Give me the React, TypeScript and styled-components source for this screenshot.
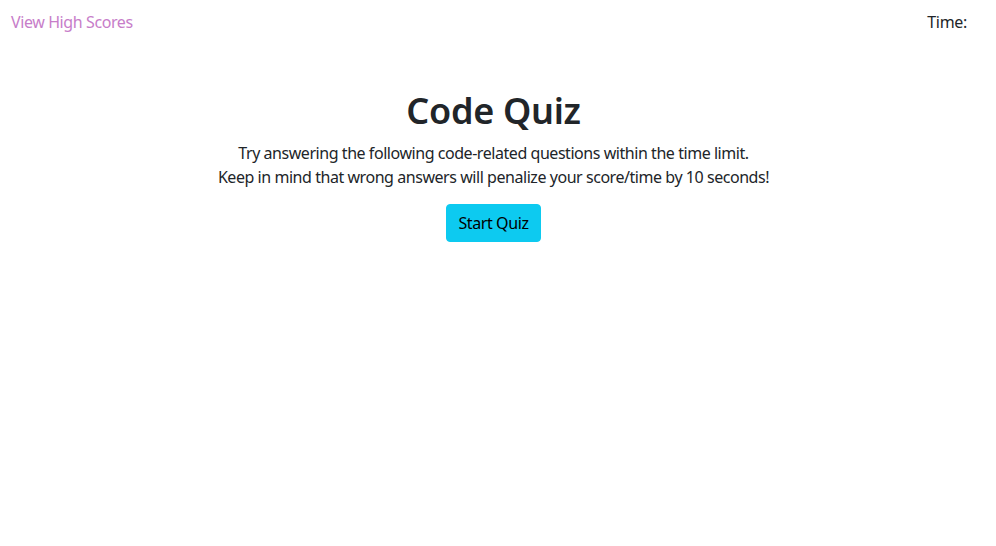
import React from "react";
import styled, { createGlobalStyle } from "styled-components";

const Global = createGlobalStyle`
  html, body { margin: 0; padding: 0; background: #ffffff; }
  body {
    font-family: "Noto Sans", "Open Sans", sans-serif;
    font-size: 16px;
    line-height: 1.5;
    color: #212529;
  }
`;

const Page = styled.div`
  width: 996px;
  height: 546px;
  box-sizing: border-box;
  padding-right: 9px;
  display: flex;
  flex-direction: column;
`;

const Header = styled.header`
  display: flex;
  justify-content: space-between;
  align-items: flex-start;
  padding: 10px 20px 0 11px;
`;

const ScoresLink = styled.a`
  color: #c77dc9;
  text-decoration: none;
  font-size: 16px;
  letter-spacing: -0.4px;
  cursor: pointer;
`;

const Timer = styled.div`
  font-size: 16px;
  letter-spacing: -0.3px;
`;

const Main = styled.main`
  display: flex;
  flex-direction: column;
  align-items: center;
  padding-top: 55px;
  text-align: center;
`;

const Title = styled.h1`
  margin: 0 0 9px;
  font-size: 36px;
  font-weight: 600;
  line-height: 1.2;
  letter-spacing: -0.3px;
`;

const Intro = styled.p`
  margin: 0 0 15px;
  font-size: 16px;
  line-height: 24px;
  letter-spacing: -0.45px;
`;

const StartButton = styled.button`
  font-family: inherit;
  font-size: 16px;
  line-height: 24px;
  letter-spacing: -0.4px;
  color: #000;
  background: #0dcaf0;
  border: 1px solid #0dcaf0;
  border-radius: 4px;
  padding: 6px 11px;
  cursor: pointer;
`;

export default function App() {
  return (
    <>
      <Global />
      <Page>
        <Header>
          <ScoresLink>View High Scores</ScoresLink>
          <Timer>Time: </Timer>
        </Header>
        <Main>
          <Title>Code Quiz</Title>
          <Intro>
            Try answering the following code-related questions within the time limit.
            <br />
            Keep in mind that wrong answers will penalize your score/time by 10 seconds!
          </Intro>
          <StartButton>Start Quiz</StartButton>
        </Main>
      </Page>
    </>
  );
}
